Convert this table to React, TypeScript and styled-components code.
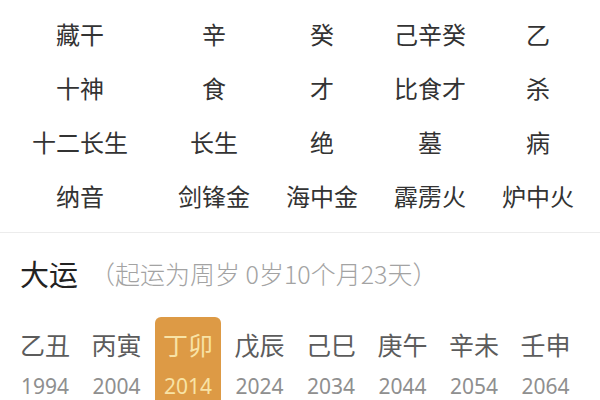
import React from "react";
import styled, { createGlobalStyle } from "styled-components";

const Global = createGlobalStyle`
  html, body { margin: 0; padding: 0; background: #fff; }
  body { width: 600px; height: 400px; overflow: hidden; font-family: "Noto Sans CJK SC", "Noto Sans", sans-serif; }
`;

const Page = styled.div`
  width: 600px;
  height: 400px;
  overflow: hidden;
  display: flex;
  flex-direction: column;
  background: #fff;
`;

const Table = styled.div`
  display: grid;
  grid-template-columns: 160px repeat(4, 108px);
  grid-auto-rows: 54px;
  padding: 6px 0 10px 0;
`;

const Cell = styled.div`
  display: flex;
  align-items: center;
  justify-content: center;
  font-size: 24px;
  color: #333;
  white-space: nowrap;
`;

const Divider = styled.div`
  height: 9px;
  background: linear-gradient(#fcfcfc, #f4f4f4);
  border-bottom: 1px solid #ececec;
`;

const Section = styled.div`
  padding: 20px 0 0 20px;
`;

const Title = styled.div`
  display: flex;
  align-items: center;
  height: 40px;
`;

const TitleMain = styled.span`
  font-size: 29px;
  color: #222;
`;

const TitleSub = styled.span`
  font-size: 25px;
  color: #a3a3a3;
  margin-left: 12px;
  font-weight: 300;
`;

const Runs = styled.div`
  display: flex;
  margin-top: 24px;
  margin-left: -8px;
  gap: 5.5px;
`;

const Run = styled.div<{ $active?: boolean }>`
  display: flex;
  flex-direction: column;
  align-items: center;
  padding: 8px 8px 0 8px;
  width: 50px;
  height: 82px;
  border-radius: 6px;
  background: ${(p) => (p.$active ? "#dd9a45" : "transparent")};
`;

const RunName = styled.div<{ $active?: boolean }>`
  font-size: 25px;
  line-height: 38px;
  color: ${(p) => (p.$active ? "#f8e3a6" : "#5c5c5c")};
  white-space: nowrap;
`;

const RunYear = styled.div<{ $active?: boolean }>`
  font-family: "Noto Sans", sans-serif;
  font-size: 21px;
  line-height: 22px;
  margin-top: 12px;
  color: ${(p) => (p.$active ? "#f8e3a6" : "#8f8f8f")};
`;

const rows = [
  ["藏干", "辛", "癸", "己辛癸", "乙"],
  ["十神", "食", "才", "比食才", "杀"],
  ["十二长生", "长生", "绝", "墓", "病"],
  ["纳音", "剑锋金", "海中金", "霹雳火", "炉中火"],
];

const runs = [
  ["乙丑", "1994"],
  ["丙寅", "2004"],
  ["丁卯", "2014"],
  ["戊辰", "2024"],
  ["己巳", "2034"],
  ["庚午", "2044"],
  ["辛未", "2054"],
  ["壬申", "2064"],
];

export default function App() {
  return (
    <Page>
      <Global />
      <Table>
        {rows.map((r, i) => r.map((c, j) => <Cell key={i + "-" + j}>{c}</Cell>))}
      </Table>
      <Divider />
      <Section>
        <Title>
          <TitleMain>大运</TitleMain>
          <TitleSub>（起运为周岁 0岁10个月23天）</TitleSub>
        </Title>
        <Runs>
          {runs.map(([n, y], i) => (
            <Run key={n} $active={i === 2}>
              <RunName $active={i === 2}>{n}</RunName>
              <RunYear $active={i === 2}>{y}</RunYear>
            </Run>
          ))}
        </Runs>
      </Section>
    </Page>
  );
}
